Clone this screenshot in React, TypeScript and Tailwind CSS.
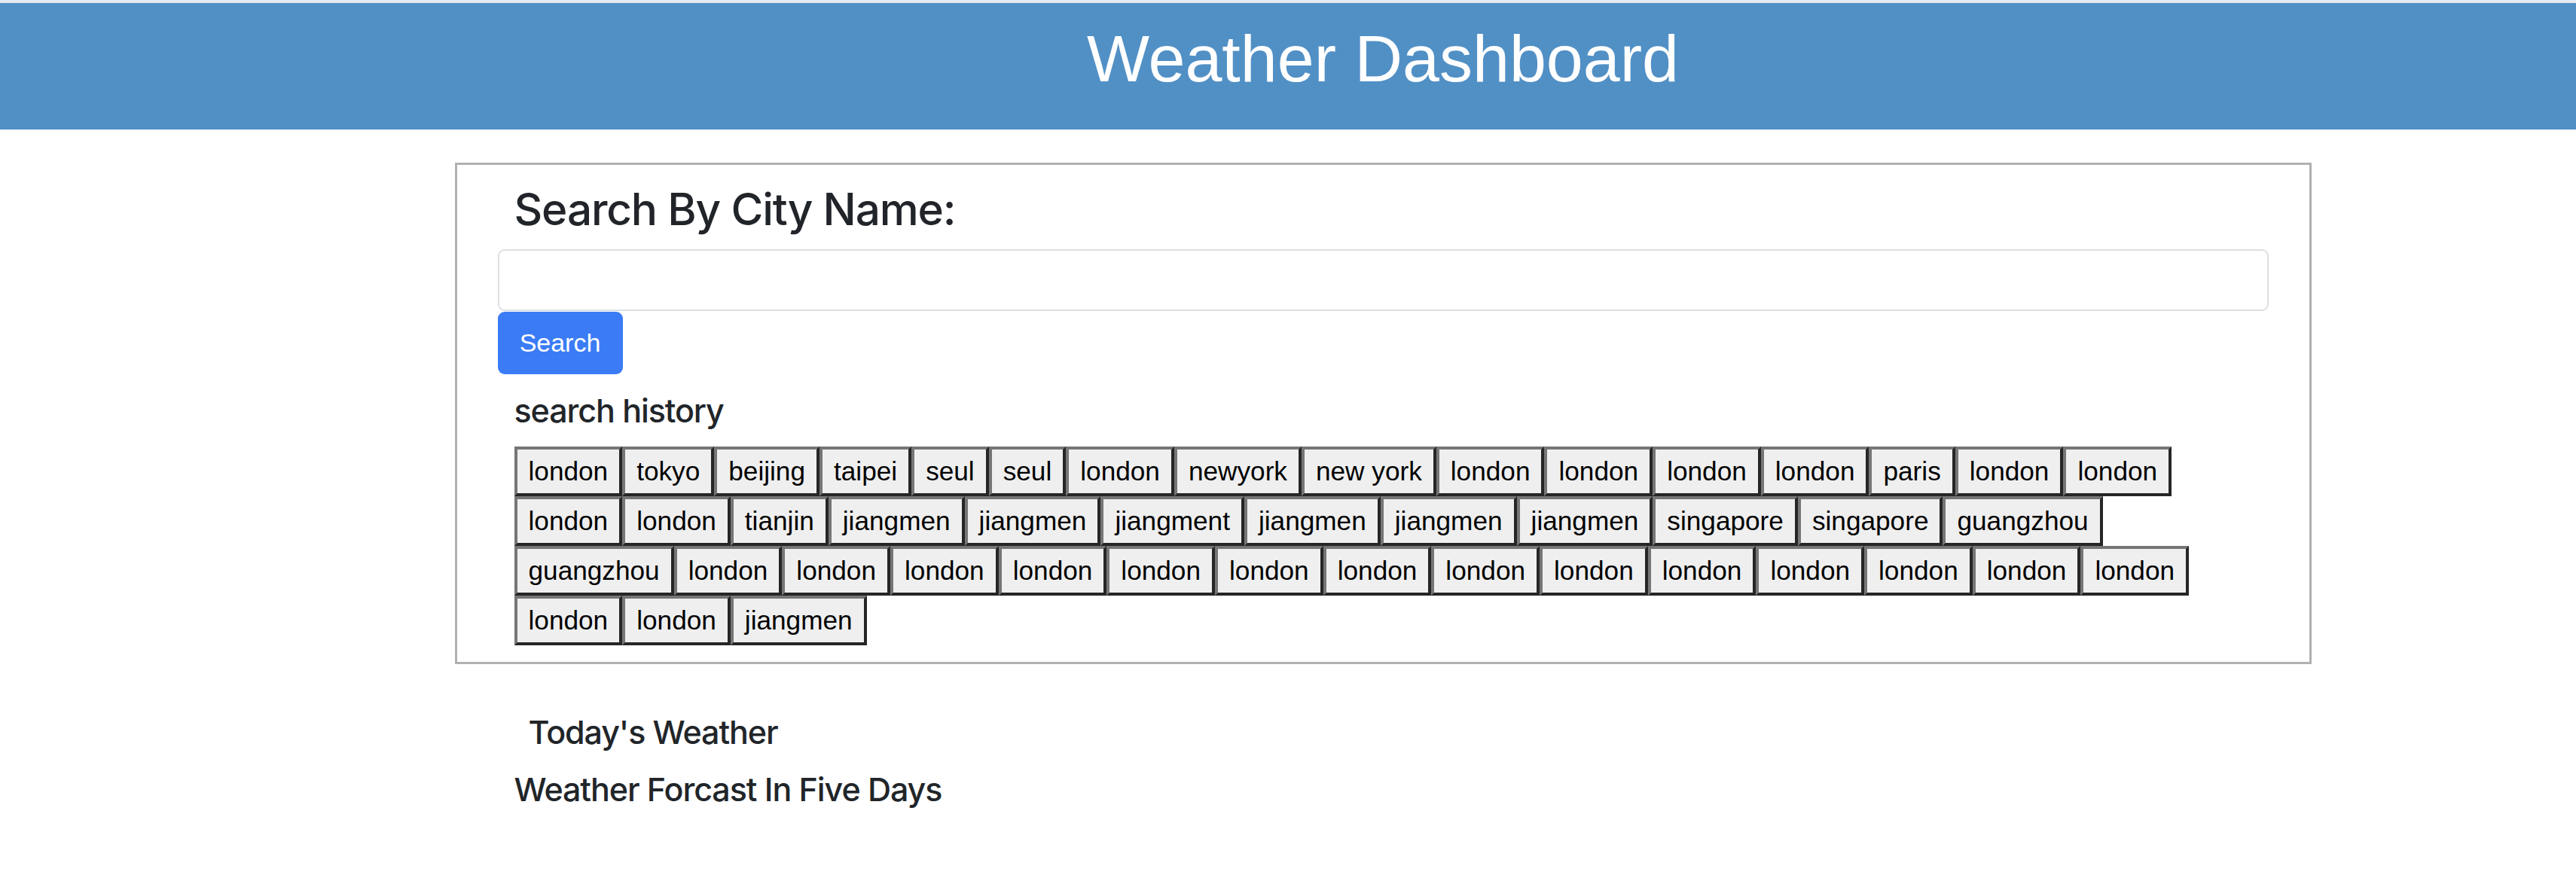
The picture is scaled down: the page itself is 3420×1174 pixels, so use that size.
const history = [
  'london', 'tokyo', 'beijing', 'taipei', 'seul', 'seul', 'london', 'newyork', 'new york', 'london',
  'london', 'london', 'london', 'paris', 'london', 'london',
  'london', 'london', 'tianjin', 'jiangmen', 'jiangmen', 'jiangment', 'jiangmen', 'jiangmen', 'jiangmen',
  'singapore', 'singapore', 'guangzhou',
  'guangzhou', 'london', 'london', 'london', 'london', 'london', 'london', 'london', 'london', 'london',
  'london', 'london', 'london', 'london', 'london',
  'london', 'london', 'jiangmen',
];

const App = () => {
  return (
    <div className="min-h-screen bg-white text-[#212529] font-['Inter',sans-serif]">
      {/* Header */}
      <header className="h-[172px] border-t-4 border-[#e2eaf2] bg-[#5190c5] pt-[24px] pl-[252px]">
        <h1 className="text-center font-['Liberation_Sans',Arial,sans-serif] text-[88px] leading-[100px] text-white">
          Weather Dashboard
        </h1>
      </header>

      <main className="pl-[252px]">
        <div className="mx-auto w-[2465px]">
          {/* Search Section */}
          <section className="mt-[44px] border-[3px] border-[#b1b1b1] px-[54px] pb-[22px]">
            <h3 className="ml-[22px] mt-[23px] text-[58.5px] font-medium leading-[72px] tracking-[-0.02em]">
              Search By City Name:
            </h3>
            <input
              type="text"
              className="mt-[17px] block h-[82px] w-full rounded-[9px] border-2 border-[#dcdfe3] px-[26px] text-[35px] outline-none"
            />
            <button className="mt-px h-[83px] w-[166px] rounded-[9px] bg-[#3b7cf6] font-['Liberation_Sans',Arial,sans-serif] text-[34px] text-white">
              Search
            </button>

            <h5 className="ml-[22px] mt-[22px] text-[43px] font-medium leading-[53px] tracking-[-0.025em]">
              search history
            </h5>
            <div className="mx-[22px] mt-[21px] flex flex-wrap">
              {history.map((city, i) => (
                <button
                  key={i}
                  className="border-4 border-t-[#767676] border-l-[#767676] border-b-[#262626] border-r-[#262626] bg-[#efefef] px-[15px] py-[3px] font-['Liberation_Sans',Arial,sans-serif] text-[35.2px] leading-[52px] text-black"
                >
                  {city}
                </button>
              ))}
            </div>
          </section>

          {/* Weather Section */}
          <h5 className="ml-[98px] mt-[64px] text-[43px] font-medium leading-[53px] tracking-[-0.025em]">
            Today's Weather
          </h5>
          <h5 className="ml-[79px] mt-[23px] text-[43px] font-medium leading-[53px] tracking-[-0.025em]">
            Weather Forcast In Five Days
          </h5>
        </div>
      </main>
    </div>
  );
};

export default App;
